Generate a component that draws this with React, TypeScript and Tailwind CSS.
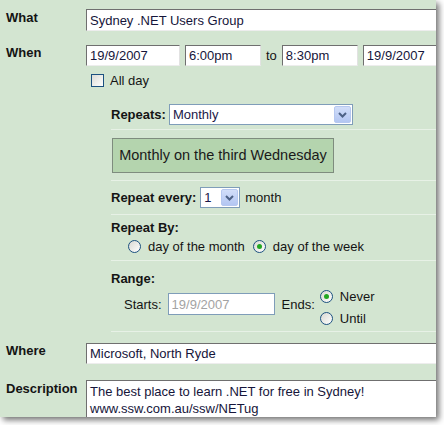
import React from "react";

const inputCls =
  "h-[21px] min-w-0 border border-t-[#6f6f6f] border-l-[#6f6f6f] border-r-[#e2e2e2] border-b-[#ededed] bg-white px-[3px] text-[13px] text-[#15153a] outline-none";

function Chevron() {
  return (
    <div className="flex h-full w-[17px] items-center justify-center rounded-[2px] border border-[#b6c8f0] bg-gradient-to-b from-[#d2def9] to-[#b3c6f2]">
      <svg width="9" height="6" viewBox="0 0 9 6">
        <path d="M1 1 L4.5 4.5 L8 1" fill="none" stroke="#4d6185" strokeWidth="2" />
      </svg>
    </div>
  );
}

function Select({ value, width }: { value: string; width: string }) {
  return (
    <div className={`flex h-[21px] items-stretch border border-[#7f9db9] bg-white p-[1px] ${width}`}>
      <span className="flex-1 pl-[2px] text-[13px] leading-[17px] text-[#1b1748]">{value}</span>
      <Chevron />
    </div>
  );
}

function Radio({ checked }: { checked?: boolean }) {
  return (
    <span className="flex h-[13px] w-[13px] shrink-0 items-center justify-center rounded-full border border-[#1c5180] bg-gradient-to-br from-[#d8d8d2] to-white">
      {checked && <span className="h-[5px] w-[5px] rounded-full bg-[#22a722]" />}
    </span>
  );
}

function Line() {
  return <div className="h-px bg-[#e7f1e6]" />;
}

export default function App() {
  return (
    <div className="h-[425px] w-[444px] bg-white font-['Liberation_Sans',Arial,sans-serif] text-[13px] leading-[15px] text-[#141414]">
      <div className="h-[417px] w-[436px] overflow-hidden bg-[#d3e5d1] shadow-[3px_3px_6px_rgba(0,0,0,0.55)]">
        {/* What */}
        <div className="mt-[9px] flex">
          <div className="w-[86px] shrink-0 pl-[6px] pt-[1px] font-bold">What</div>
          <input readOnly value="Sydney .NET Users Group" className={`${inputCls} h-[22px] flex-1 border-r-0`} />
        </div>

        {/* When */}
        <div className="mt-[14px] flex">
          <div className="w-[86px] shrink-0 pl-[6px] font-bold">When</div>
          <div className="flex flex-1 items-center">
            <input readOnly value="19/9/2007" className={`${inputCls} w-[94px]`} />
            <input readOnly value="6:00pm" className={`${inputCls} ml-[5px] w-[76px]`} />
            <span className="ml-[5px] mr-[5px] text-[#141414]">to</span>
            <input readOnly value="8:30pm" className={`${inputCls} w-[76px]`} />
            <input readOnly value="19/9/2007" className={`${inputCls} ml-[5px] flex-1 border-r-0`} />
          </div>
        </div>

        {/* All day */}
        <div className="ml-[91px] mt-[7px] flex items-center">
          <span className="h-[13px] w-[13px] border border-[#1c5180] bg-gradient-to-br from-[#dcdcd6] to-white" />
          <span className="ml-[6px]">All day</span>
        </div>

        {/* Repeat options */}
        <div className="ml-[111px] flex flex-col">
          <div className="mt-[16px] flex items-center">
            <span className="font-bold">Repeats:</span>
            <div className="ml-[3px]">
              <Select value="Monthly" width="w-[184px]" />
            </div>
          </div>
          <div className="mt-[4px]">
            <Line />
          </div>

          <div className="ml-[1px] mt-[8px] flex h-[35px] w-[222px] items-center justify-center border border-[#7e8c7e] bg-[#b4d4ae] text-[14.5px] text-[#1a1a1a]">
            Monthly on the third Wednesday
          </div>
          <div className="mt-[7px]">
            <Line />
          </div>

          <div className="mt-[6px] flex items-center">
            <span className="font-bold">Repeat every:</span>
            <div className="ml-[4px]">
              <Select value="1" width="w-[40px]" />
            </div>
            <span className="ml-[5px]">month</span>
          </div>
          <div className="mt-[6px]">
            <Line />
          </div>

          <div className="mt-[5px] font-bold">Repeat By:</div>
          <div className="ml-[17px] mt-[3px] flex h-[16px] items-center">
            <Radio />
            <span className="ml-[7px]">day of the month</span>
            <span className="ml-[8px]">
              <Radio checked />
            </span>
            <span className="ml-[7px]">day of the week</span>
          </div>
          <div className="mt-[6px]">
            <Line />
          </div>

          <div className="mt-[10px] font-bold">Range:</div>
          <div className="mt-[2px] flex items-start">
            <div className="ml-[13px] mt-[5px] flex h-[22px] items-center">
              <span>Starts:</span>
              <input
                readOnly
                value="19/9/2007"
                className="ml-[6px] h-[22px] w-[107px] border border-[#7f9db9] bg-white px-[3px] text-[13px] text-[#a3a3a3] outline-none"
              />
              <span className="ml-[7px]">Ends:</span>
            </div>
            <div className="ml-[5px] flex flex-col">
              <div className="flex h-[16px] items-center">
                <Radio checked />
                <span className="ml-[7px]">Never</span>
              </div>
              <div className="mt-[6px] flex h-[16px] items-center">
                <Radio />
                <span className="ml-[7px]">Until</span>
              </div>
            </div>
          </div>
          <div className="mt-[5px]">
            <Line />
          </div>
        </div>

        {/* Where */}
        <div className="mt-[11px] flex">
          <div className="w-[86px] shrink-0 pl-[6px] font-bold">Where</div>
          <input readOnly value="Microsoft, North Ryde" className={`${inputCls} flex-1 border-r-0`} />
        </div>

        {/* Description */}
        <div className="mt-[16px] flex">
          <div className="w-[86px] shrink-0 pl-[6px] pt-[1px] font-bold">Description</div>
          <textarea
            readOnly
            value={"The best place to learn .NET for free in Sydney!\nwww.ssw.com.au/ssw/NETug"}
            className="h-[40px] flex-1 resize-none overflow-hidden border border-t-[#6f6f6f] border-l-[#6f6f6f] border-r-0 border-b-0 bg-white px-[3px] pt-[2px] text-[13px] leading-[17px] text-[#15153a] outline-none"
          />
        </div>
      </div>
    </div>
  );
}
